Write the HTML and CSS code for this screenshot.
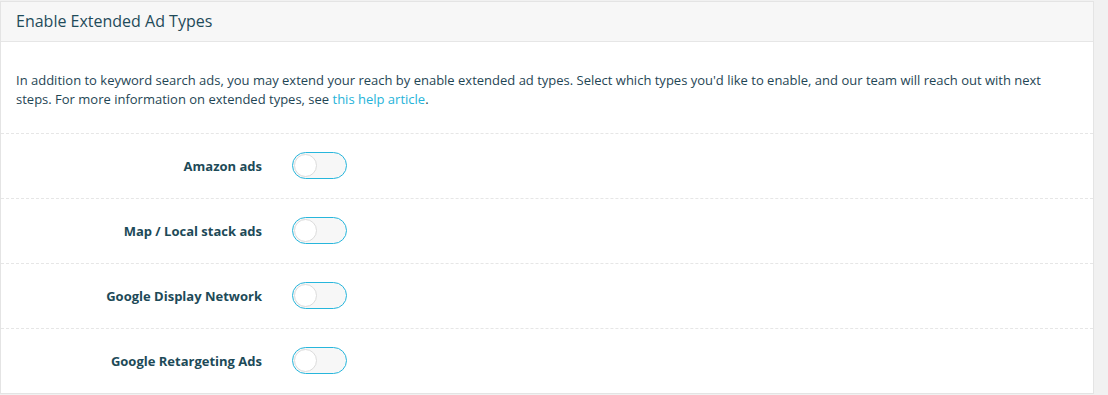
FILE: index.html
```html
<!DOCTYPE html>
<html>
<head>
<meta charset="utf-8">
<link rel="stylesheet" href="styles.css">
</head>
<body>
<div class="card">
  <div class="card-header">Enable Extended Ad Types</div>
  <p class="intro">In addition to keyword search ads, you may extend your reach by enable extended ad types. Select which types you'd like to enable, and our team will reach out with next steps. For more information on extended types, see <a href="#">this help article</a>.</p>
  <div class="row">
    <span class="label">Amazon ads</span>
    <span class="toggle"><span class="knob"></span></span>
  </div>
  <div class="row">
    <span class="label">Map / Local stack ads</span>
    <span class="toggle"><span class="knob"></span></span>
  </div>
  <div class="row">
    <span class="label">Google Display Network</span>
    <span class="toggle"><span class="knob"></span></span>
  </div>
  <div class="row">
    <span class="label">Google Retargeting Ads</span>
    <span class="toggle"><span class="knob"></span></span>
  </div>
</div>
</body>
</html>
```
FILE: styles.css
```css
html, body {
  margin: 0;
  padding: 0;
}
body {
  background: #f1f1f1;
  padding-top: 1px;
  font-family: "Open Sans", "Noto Sans", sans-serif;
  color: #1d4a58;
}
.card {
  width: 1092px;
  background: #fff;
  border: 1px solid #e4e4e4;
  box-sizing: content-box;
}
.card-header {
  height: 39px;
  line-height: 39px;
  background: #f7f7f7;
  border-bottom: 1px solid #e6e6e6;
  padding: 0 15px;
  font-size: 16px;
  color: #1f4b5a;
}
.intro {
  margin: 0;
  padding: 29px 20px 24px 15px;
  font-size: 13px;
  line-height: 19px;
  color: #1f4655;
}
.intro a {
  color: #26b3d9;
  text-decoration: none;
}
.row {
  display: flex;
  align-items: center;
  gap: 30px;
  height: 64px;
  border-top: 1px dashed #e6e6e6;
}
.label {
  width: 261px;
  text-align: right;
  font-size: 13px;
  font-weight: 700;
  color: #1d4a58;
}
.toggle {
  display: flex;
  align-items: center;
  width: 51px;
  height: 25px;
  border: 1px solid #27b6dc;
  border-radius: 14px;
  background: #f7f7f7;
  padding: 0 1px;
  margin-top: -2px;
}
.knob {
  width: 23px;
  height: 23px;
  border-radius: 50%;
  background: #fff;
  border: 1px solid #dcdcdc;
  box-sizing: border-box;
}
```
